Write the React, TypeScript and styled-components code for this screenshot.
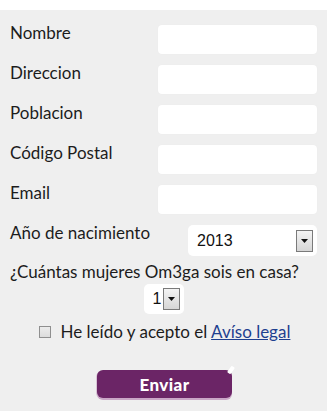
import React from "react";
import styled, { createGlobalStyle } from "styled-components";

const GlobalStyle = createGlobalStyle`
  body {
    margin: 0;
    background: #fff;
  }
`;

const Page = styled.div`
  padding-top: 10px;
`;

const Form = styled.form`
  background: #efefef;
  padding: 15px 10px 13px 10px;
  font-family: "Lato", "Open Sans", sans-serif;
  font-size: 17px;
  color: #1c1c1c;
`;

const Row = styled.div<{ $height?: number }>`
  display: flex;
  justify-content: space-between;
  align-items: flex-start;
  height: ${({ $height }) => $height ?? 40}px;
`;

const Label = styled.label`
  line-height: 20px;
  margin-top: -2px;
`;

const TextInput = styled.input`
  box-sizing: border-box;
  width: 159px;
  height: 29px;
  border: none;
  border-radius: 4px;
  background: #fff;
  box-shadow: 0 0 1px #e6e6e6;
  outline: none;
`;

const SelectBox = styled.div<{ $width: number; $height: number }>`
  box-sizing: border-box;
  display: flex;
  align-items: center;
  justify-content: space-between;
  width: ${({ $width }) => $width}px;
  height: ${({ $height }) => $height}px;
  padding: 0 4px 0 9px;
  background: #fff;
  border-radius: 5px;
  font-family: "Liberation Sans", Arial, sans-serif;
  font-size: 16px;
  color: #111;
`;

const ArrowBox = styled.span`
  box-sizing: border-box;
  display: flex;
  align-items: center;
  justify-content: center;
  width: 17px;
  height: 22px;
  border: 1px solid #7a7a7a;
  background: linear-gradient(#f4f4f4, #d6d6d6);
`;

const Question = styled.div`
  line-height: 20px;
  margin-top: -3px;
`;

const CountRow = styled.div`
  display: flex;
  justify-content: center;
  margin-top: 2px;
`;

const CheckRow = styled.div`
  display: flex;
  justify-content: center;
  align-items: center;
  gap: 10px;
  margin: 8px 0 0 2px;
  line-height: 20px;
`;

const CheckBox = styled.span`
  box-sizing: border-box;
  width: 12px;
  height: 12px;
  border: 1px solid #8f8f8f;
  background: linear-gradient(#ececec, #dcdcdc);
`;

const LegalLink = styled.a`
  color: #1e3f8f;
  text-decoration: underline;
`;

const ButtonRow = styled.div`
  display: flex;
  justify-content: center;
  margin-top: 28px;
  padding-left: 2px;
`;

const SubmitButton = styled.button`
  position: relative;
  width: 135px;
  height: 28px;
  border: none;
  border-radius: 6px;
  background: #6b2566;
  box-shadow: 0 2px 0 #c9a6c6, -1px 1px 0 #d8c2d6;
  color: #fff;
  font-family: "Lato", sans-serif;
  font-weight: 900;
  font-size: 17px;
  letter-spacing: 0.4px;
  &::after {
    content: "";
    position: absolute;
    top: -4px;
    right: -1px;
    width: 4px;
    height: 8px;
    background: #fff;
    transform: rotate(35deg);
    border-radius: 1px;
  }
`;

const Arrow = () => (
  <svg width="7" height="4" viewBox="0 0 7 4">
    <path d="M0 0 H7 L3.5 4 Z" fill="#111" />
  </svg>
);

const fields = ["Nombre", "Direccion", "Poblacion", "Código Postal", "Email"];

const App: React.FC = () => (
  <Page>
    <GlobalStyle />
    <Form onSubmit={(e) => e.preventDefault()}>
      {fields.map((f) => (
        <Row key={f}>
          <Label>{f}</Label>
          <TextInput type="text" />
        </Row>
      ))}
      <Row>
        <Label>Año de nacimiento</Label>
        <SelectBox $width={129} $height={31}>
          <span>2013</span>
          <ArrowBox>
            <Arrow />
          </ArrowBox>
        </SelectBox>
      </Row>
      <Question>¿Cuántas mujeres Om3ga sois en casa?</Question>
      <CountRow>
        <SelectBox $width={40} $height={30}>
          <span>1</span>
          <ArrowBox>
            <Arrow />
          </ArrowBox>
        </SelectBox>
      </CountRow>
      <CheckRow>
        <CheckBox />
        <span>
          He leído y acepto el <LegalLink href="#">Avíso legal</LegalLink>
        </span>
      </CheckRow>
      <ButtonRow>
        <SubmitButton type="submit">Enviar</SubmitButton>
      </ButtonRow>
    </Form>
  </Page>
);

export default App;
